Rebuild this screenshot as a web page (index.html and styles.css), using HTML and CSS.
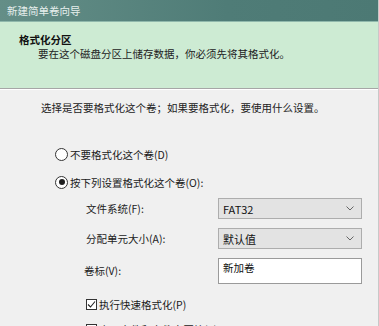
FILE: index.html
```html
<!DOCTYPE html>
<html lang="zh-CN">
<head>
<meta charset="utf-8">
<title>新建简单卷向导</title>
<link rel="stylesheet" href="styles.css">
</head>
<body>
<div class="window">
  <div class="titlebar">新建简单卷向导</div>
  <div class="header">
    <div class="h-title">格式化分区</div>
    <div class="h-sub">要在这个磁盘分区上储存数据，你必须先将其格式化。</div>
  </div>
  <div class="content">
    <div class="intro">选择是否要格式化这个卷；如果要格式化，要使用什么设置。</div>
    <div class="radio-row first"><span class="radio"></span><span>不要格式化这个卷(D)</span></div>
    <div class="radio-row second"><span class="radio checked"></span><span>按下列设置格式化这个卷(O):</span></div>
    <div class="form">
      <div class="label">文件系统(F):</div>
      <div class="combo"><span>FAT32</span><svg class="chev" viewBox="0 0 8 5" width="8" height="5"><path d="M0.5 0.5 L4 4 L7.5 0.5" fill="none" stroke="#666" stroke-width="1"/></svg></div>
      <div class="label">分配单元大小(A):</div>
      <div class="combo"><span>默认值</span><svg class="chev" viewBox="0 0 8 5" width="8" height="5"><path d="M0.5 0.5 L4 4 L7.5 0.5" fill="none" stroke="#666" stroke-width="1"/></svg></div>
      <div class="label lbl-vol">卷标(V):</div>
      <div class="textbox">新加卷</div>
    </div>
    <div class="check-row c1"><span class="check"><svg viewBox="0 0 11 11" width="11" height="11"><path d="M2 5.5 L4.5 8 L9 2.5" fill="none" stroke="#222" stroke-width="1.1"/></svg></span><span>执行快速格式化(P)</span></div>
    <div class="check-row c2"><span class="check"></span><span>启用文件和文件夹压缩(E)</span></div>
  </div>
</div>
</body>
</html>
```
FILE: styles.css
```css
html, body {
  margin: 0;
  padding: 0;
}
body {
  background: #f0f0f0;
  font-family: "Noto Sans CJK SC", "Microsoft YaHei", "Noto Sans", sans-serif;
  font-size: 10.5px;
  color: #1a1a1a;
  width: 379px;
  height: 326px;
  overflow: hidden;
}
.window {
  width: 378px;
  border-right: 1px solid #c8c8c8;
  min-height: 326px;
}
.titlebar {
  height: 21px;
  line-height: 21px;
  padding-left: 7px;
  color: #e6efed;
  background: linear-gradient(to right, #648e87, #4f7c77 60%, #4c7974);
  border-bottom: 1px solid #90b8ac;
}
.header {
  background: #cdebd3;
  height: 67px;
  box-sizing: border-box;
  padding-top: 11px;
  border-bottom: 1px solid #a6a6a6;
  box-shadow: 0 1px 0 #ffffff;
}
.h-title {
  font-weight: bold;
  line-height: 14px;
  padding-left: 19px;
  color: #111;
}
.h-sub {
  line-height: 14px;
  padding-left: 38px;
  color: #222;
}
.content {
  padding-top: 12px;
}
.intro {
  line-height: 14px;
  padding-left: 41px;
  color: #222;
}
.radio-row {
  display: flex;
  align-items: center;
  gap: 2px;
  padding-left: 55px;
  height: 14px;
}
.radio-row.first { margin-top: 32px; }
.radio-row.second { margin-top: 14px; }
.radio {
  width: 11px;
  height: 11px;
  border: 1px solid #333;
  border-radius: 50%;
  background: #fff;
  display: flex;
  align-items: center;
  justify-content: center;
  flex: none;
}
.radio.checked::after {
  content: "";
  width: 6px;
  height: 6px;
  border-radius: 50%;
  background: #1e1e1e;
}
.form {
  display: grid;
  grid-template-columns: 132px 144px;
  row-gap: 9px;
  padding-left: 86px;
  margin-top: 9px;
  align-items: center;
}
.combo {
  height: 21px;
  box-sizing: border-box;
  border: 1px solid #adadad;
  background: #e3e3e3;
  display: flex;
  align-items: center;
  justify-content: space-between;
  padding: 0 7px 0 4px;
  color: #111;
  font-size: 11px;
}
.textbox {
  height: 26px;
  box-sizing: border-box;
  border: 1px solid #9a9a9a;
  background: #fff;
  padding: 2px 4px 0;
  line-height: 14px;
  align-self: start;
  color: #111;
}
.label {
  color: #222;
  line-height: 14px;
}
.lbl-vol {
  margin-left: -2px;
}
.check-row {
  display: flex;
  align-items: center;
  gap: 2px;
  padding-left: 86px;
  height: 14px;
}
.check-row.c1 { margin-top: 13px; }
.check-row.c2 { margin-top: 11px; }
.check {
  width: 11px;
  height: 11px;
  box-sizing: border-box;
  border: 1px solid #333;
  background: #fff;
  display: flex;
  flex: none;
}
.check svg {
  margin: -1px;
}
```
